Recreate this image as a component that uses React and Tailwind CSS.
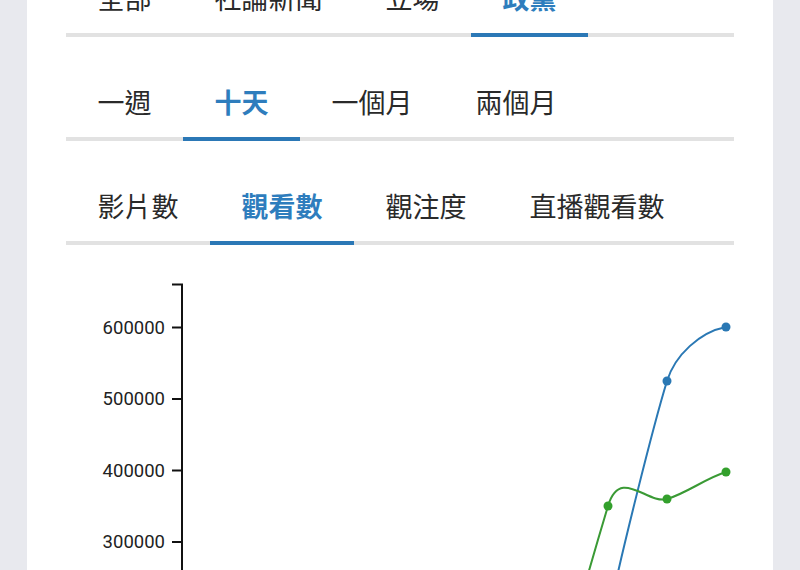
const tabRows = [
  { items: ['全部', '社論新聞', '立場', '政黨'], active: 3 },
  { items: ['一週', '十天', '一個月', '兩個月'], active: 1 },
  { items: ['影片數', '觀看數', '觀注度', '直播觀看數'], active: 1 },
]

const ticks = [
  { label: '600000', y: 327.5 },
  { label: '500000', y: 399 },
  { label: '400000', y: 470.5 },
  { label: '300000', y: 542 },
]

const blueDots = [[667, 381], [726, 327]]
const greenDots = [[608, 506], [667, 499], [726, 472]]

function TabRow({ items, active, first }) {
  return (
    <div className={`flex border-b-4 border-[#e2e2e2] ${first ? '' : 'mt-[28px]'}`}>
      {items.map((item, i) => (
        <div
          key={item}
          className={`-mb-1 border-b-4 px-[31.5px] pt-[18px] pb-[16px] text-[27px] leading-[38px] whitespace-nowrap ${
            i === active
              ? 'border-[#2b78b6] font-bold text-[#2e7dbd]'
              : 'border-transparent text-[#2a2a2a]'
          }`}
        >
          {item}
        </div>
      ))}
    </div>
  )
}

function Chart() {
  return (
    <svg width="746" height="360" viewBox="27 245 746 360" className="block shrink-0">
      <path d="M172,284.5H182V620" fill="none" stroke="#111" strokeWidth="2" />
      {ticks.map((t) => (
        <g key={t.label}>
          <line x1="172" x2="182" y1={t.y} y2={t.y} stroke="#111" strokeWidth="2" />
          <text
            x="165"
            y={t.y}
            textAnchor="end"
            dominantBaseline="central"
            fontFamily="Roboto, 'Liberation Sans', sans-serif"
            fontSize="18.5"
            fill="#222"
          >
            {t.label}
          </text>
        </g>
      ))}
      <path
        d="M604,640 L612,600 C620,560 652,430 667,381 C675,355 700,332 726,327"
        fill="none"
        stroke="#2a78b4"
        strokeWidth="2"
      />
      <path
        d="M570,640 L575,620 C582,595 593,556 608,506 C620,466 647.3,504.7 667,499 C686.7,493.3 706,478 726,472"
        fill="none"
        stroke="#3a9a35"
        strokeWidth="2"
      />
      {blueDots.map(([x, y]) => (
        <circle key={`b${x}`} cx={x} cy={y} r="4.5" fill="#2a78b4" />
      ))}
      {greenDots.map(([x, y]) => (
        <circle key={`g${x}`} cx={x} cy={y} r="4.5" fill="#33a02c" />
      ))}
    </svg>
  )
}

export default function App() {
  return (
    <div
      className="w-[800px] h-[570px] overflow-hidden bg-[#e8e9ee] px-[27px]"
      style={{ fontFamily: "'Noto Sans CJK TC', 'Noto Sans', sans-serif" }}
    >
      <div className="flex h-full flex-col bg-white">
        <div className="shrink-0 px-[39px] -mt-[39px]">
          {tabRows.map((row, i) => (
            <TabRow key={i} items={row.items} active={row.active} first={i === 0} />
          ))}
        </div>
        <Chart />
      </div>
    </div>
  )
}
